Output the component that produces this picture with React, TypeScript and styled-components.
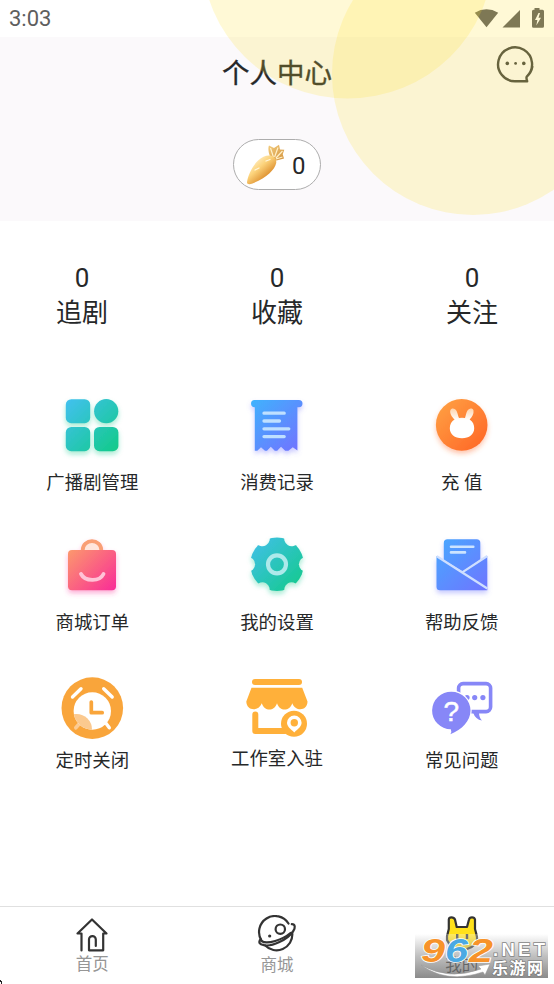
import React from "react";
import styled, { createGlobalStyle } from "styled-components";

const GlobalStyle = createGlobalStyle`
  * { box-sizing: border-box; }
  body { margin: 0; background: #fff; }
`;

const Screen = styled.div`
  position: relative;
  display: flex;
  flex-direction: column;
  width: 554px;
  height: 984px;
  overflow: hidden;
  background: #fff;
  color: #262829;
  font-family: Roboto, "Noto Sans CJK SC", sans-serif;
`;

const StatusBar = styled.div`
  display: flex;
  align-items: center;
  justify-content: space-between;
  height: 37px;
  padding: 1px 9px 0;
  font-size: 22px;
  line-height: 34px;
  color: #5e5e5e;
`;

const StatusIcons = styled.svg`
  display: block;
  width: 72px;
  height: 22px;
`;

const Header = styled.header`
  display: flex;
  flex-direction: column;
  align-items: center;
  height: 184px;
  background: #fbf9fb;
`;

const TitleBar = styled.div`
  display: grid;
  grid-template-columns: 1fr auto 1fr;
  width: 100%;
  height: 72px;
  padding: 0 20px;
`;

const Title = styled.h1`
  grid-column: 2;
  margin: 0;
  font-size: 27.5px;
  font-weight: 400;
  line-height: 73px;
  -webkit-text-stroke: 0.35px #262829;
`;

const ChatIcon = styled.svg`
  justify-self: end;
  width: 40px;
  height: 40px;
  margin-top: 7px;
`;

const Balance = styled.div`
  display: flex;
  align-items: center;
  width: 88px;
  height: 51px;
  margin-top: 30px;
  padding-left: 11px;
  gap: 5px;
  border: 1.5px solid #adadad;
  border-radius: 26px;
  background: #fff;
  font-size: 24px;
  line-height: 28px;
`;

const Amount = styled.span`
  padding-top: 3px;
`;

const Glow = styled.svg`
  position: absolute;
  inset: 0 0 auto 0;
  width: 554px;
  height: 221px;
  pointer-events: none;
`;

const Stats = styled.section`
  display: flex;
  justify-content: space-between;
  height: 164px;
  padding: 40px 56px 0;
`;

const Stat = styled.div`
  display: flex;
  flex-direction: column;
  align-items: center;
  font-size: 26px;
  line-height: 35px;
`;

const Menu = styled.section`
  display: grid;
  grid-template-columns: repeat(3, 1fr);
  grid-auto-rows: 140px;
  flex: 1;
`;

const MenuItem = styled.div<{ $gap: number }>`
  display: flex;
  flex-direction: column;
  align-items: center;
  gap: ${(p) => p.$gap}px;
  font-size: 18.4px;
  line-height: 26px;
  white-space: pre;
`;

const MenuIcon = styled.svg`
  display: block;
  width: 80px;
  height: 80px;
  flex: none;
  overflow: visible;
`;

const TabBar = styled.nav`
  display: grid;
  grid-template-columns: repeat(3, 1fr);
  height: 78px;
  border-top: 1px solid #e0e0e0;
`;

const Tab = styled.div<{ $active?: boolean; $drop?: number }>`
  display: flex;
  flex-direction: column;
  align-items: center;
  padding-top: 8px;
  gap: ${(p) => p.$drop ?? 1}px;
  font-size: 16.5px;
  line-height: 20px;
  color: ${(p) => (p.$active ? "#262829" : "#969696")};
`;

const TabIcon = styled.svg`
  display: block;
  width: 40px;
  height: 38px;
  flex: none;
`;

const Watermark = styled.div`
  position: absolute;
  left: 415px;
  top: 934px;
  width: 133px;
  height: 44px;
  background: linear-gradient(rgba(255, 255, 255, 0.3), rgba(150, 150, 150, 0.6) 50%, rgba(110, 110, 110, 0.8));
`;

const WatermarkArt = styled.svg`
  display: block;
  width: 133px;
  height: 44px;
  overflow: visible;
`;

const CornerMark = styled.svg`
  position: absolute;
  left: 0;
  bottom: 0;
  width: 3px;
  height: 4px;
`;

const GradientDef = ({ id, from, to }: { id: string; from: string; to: string }) => (
  <defs>
    <linearGradient id={id} gradientUnits="userSpaceOnUse" x1="16" y1="16" x2="64" y2="64">
      <stop offset="0" stopColor={from} />
      <stop offset="1" stopColor={to} />
    </linearGradient>
    <filter id={id + "-shadow"} x="-30%" y="-30%" width="160%" height="160%">
      <feDropShadow dx="0" dy="3" stdDeviation="2.8" floodColor={to} floodOpacity="0.38" />
    </filter>
  </defs>
);

const ManageIcon = () => (
  <MenuIcon viewBox="0 0 80 80">
    <GradientDef id="manage" from="#40c1ec" to="#13ca8c" />
    <g fill="url(#manage)" filter="url(#manage-shadow)">
      <rect x="13.8" y="14.2" width="24.4" height="24" rx="5.5" />
      <circle cx="54.2" cy="26.2" r="12.1" />
      <rect x="13.8" y="42" width="24.4" height="24.2" rx="5.5" />
      <rect x="42" y="42" width="24.4" height="24.2" rx="5.5" />
    </g>
  </MenuIcon>
);

const ReceiptIcon = () => (
  <MenuIcon viewBox="0 0 80 80">
    <GradientDef id="receipt" from="#40b1fd" to="#7272ff" />
    <path
      fill="url(#receipt)"
      filter="url(#receipt-shadow)"
      d="M17.5 15h44.4a3.5 3.5 0 0 1 0 7.2H60.4V65.5L55.8 62.2 51.4 65.8 48.2 65.8 44 61.7 40.2 65.8 37.8 65.8 33.8 61.7 30 65.8 28 65.8 24 62.2 20.3 65.8H17.8V22.2a3.6 3.6 0 0 1 -.3-7.2Z"
    />
    <path d="M27 28.2H47.2M27 36H42.5M27 43.8H51.8M27 51.6H47.2" stroke="#bfe0ff" strokeWidth="3.3" strokeLinecap="round" />
  </MenuIcon>
);

const RechargeIcon = () => (
  <MenuIcon viewBox="0 0 80 80">
    <GradientDef id="recharge" from="#ffa143" to="#ff6526" />
    <circle cx="39.7" cy="39.9" r="25.8" fill="url(#recharge)" filter="url(#recharge-shadow)" />
    <linearGradient id="bunny" x1="0" y1="0" x2="0" y2="1">
      <stop offset="0" stopColor="#ffd4ac" />
      <stop offset="0.4" stopColor="#fff" />
    </linearGradient>
    <path
      fill="url(#bunny)"
      d="M32.6 34.4C29.6 32 27.6 28 28.3 25.5C29.4 22.6 33.2 23.2 34.7 26.2C35.8 28.6 36 31 37 33Q40.2 32.5 43 33C43.8 31 44 28.2 45.2 26C46.8 23 50.6 22.6 51.5 25.5C52 28.7 50.2 32.2 47.6 34.5C50.9 36.4 52.2 39.8 52.2 43.2C52.2 49.2 47.3 53.2 40 53.2C32.6 53.2 27.8 49.2 27.8 43.2C27.8 39.2 29.6 36.2 32.6 34.4Z"
    />
  </MenuIcon>
);

const OrderIcon = () => (
  <MenuIcon viewBox="0 0 80 80">
    <GradientDef id="order" from="#fca468" to="#f92d97" />
    <g filter="url(#order-shadow)">
      <path d="M30.8 27V24.6a9.2 8.5 0 0 1 18.4 0V27" fill="#ffe5dc" stroke="#f99f75" strokeWidth="3.8" />
      <rect x="16" y="25" width="48" height="40.2" rx="4" fill="url(#order)" />
    </g>
    <path d="M29 49C33 56.6 47.5 57.2 51.5 49" fill="none" stroke="#ffc3d7" strokeWidth="3.8" strokeLinecap="round" />
  </MenuIcon>
);

const SettingsIcon = () => (
  <MenuIcon viewBox="0 0 80 80">
    <GradientDef id="settings" from="#40c0e6" to="#13ca8c" />
    <mask id="gear-notches">
      <circle cx="40" cy="39.3" r="26.8" fill="#fff" />
      {[0, 60, 120, 180, 240, 300].map((angle) => (
        <circle key={angle} cx="69.3" cy="39.3" r="7.4" transform={`rotate(${angle} 40 39.3)`} />
      ))}
    </mask>
    <g filter="url(#settings-shadow)">
      <rect x="10" y="10" width="60" height="60" fill="url(#settings)" mask="url(#gear-notches)" />
    </g>
    <circle cx="40" cy="39.3" r="9" fill="none" stroke="#ade9ea" strokeWidth="4.2" />
  </MenuIcon>
);

const FeedbackIcon = () => (
  <MenuIcon viewBox="0 0 80 80">
    <GradientDef id="feedback" from="#49a7ff" to="#6e76ff" />
    <g fill="url(#feedback)" filter="url(#feedback-shadow)">
      <path d="M25.5 14.3H54.6a3.7 3.7 0 0 1 3.7 3.7V34.5L41 46.5 21.8 35V18A3.7 3.7 0 0 1 25.5 14.3Z" />
      <path d="M14.5 31L41 47.5 65.3 31V65.2H18a3.5 3.5 0 0 1-3.5-3.5Z" />
    </g>
    <path d="M14.8 31.2L65.3 63.5M40.6 47.2L65.3 31" stroke="#cfdfff" strokeWidth="2.2" />
    <path d="M29 21.8H51.3M29 27.4H43" stroke="#cce4ff" strokeWidth="2.6" strokeLinecap="round" />
  </MenuIcon>
);

const TimerIcon = () => (
  <MenuIcon viewBox="0 0 80 80">
    <clipPath id="clock-face"><circle cx="40.3" cy="46" r="18.7" /></clipPath>
    <circle cx="40.3" cy="43.1" r="30.8" fill="#f9a53b" />
    <path d="M53 57L57.3 62.8M20.5 32L29 23.8M51.7 23.8L60.2 32" stroke="#fff" strokeWidth="3.4" strokeLinecap="round" />
    <path d="M28 58L23.8 62.8" stroke="#fccb92" strokeWidth="3.6" strokeLinecap="round" />
    <circle cx="40.3" cy="46" r="18.7" fill="#fff" />
    <circle cx="24.5" cy="64.5" r="15.5" fill="#fbc98f" clipPath="url(#clock-face)" />
    <path d="M39.3 37V47.7H50.2" fill="none" stroke="#f9a53b" strokeWidth="3.7" strokeLinecap="round" strokeLinejoin="round" />
  </MenuIcon>
);

const StudioIcon = () => (
  <MenuIcon viewBox="0 0 80 80">
    <g fill="#ffb03a">
      <rect x="15" y="14" width="50" height="6" rx="3" />
      <path d="M14.5 22.8H65.2L70.5 36.5C70.5 46 58.5 47 55.3 38.2C52.5 46.7 42.8 46.7 40 38.2C37.2 46.7 27.5 46.7 24.8 38.2C21.5 47 9.5 46 9.3 36.5Z" />
      <circle cx="57" cy="58.7" r="13" />
    </g>
    <path d="M18.3 49.5V66H48" fill="none" stroke="#ffb03a" strokeWidth="6" strokeLinecap="round" strokeLinejoin="round" />
    <path d="M57.3 67.4C53.5 64 50 61.4 50 57.8a7.3 7.3 0 0 1 14.6 0C64.6 61.4 61 64 57.3 67.4Z" fill="#fff" />
    <circle cx="57.3" cy="57.7" r="3.7" fill="#ffb03a" />
  </MenuIcon>
);

const QuestionMark = styled.text`
  font: 400 28px "Liberation Sans", sans-serif;
  fill: #fff;
  stroke: #fff;
  stroke-width: 0.5px;
  text-anchor: middle;
`;

const FaqIcon = () => (
  <MenuIcon viewBox="0 0 80 80">
    <rect x="36.6" y="18.6" width="32" height="28" rx="4.5" fill="#fff" stroke="#8787f7" strokeWidth="3.6" />
    <path d="M51 47.5H57Q57 52.5 60 55.5Q53.5 54.5 51 47.5Z" fill="#8787f7" />
    <g fill="#8787f7">
      <circle cx="45" cy="32.6" r="2.6" />
      <circle cx="52.7" cy="32.6" r="2.6" />
      <circle cx="60.9" cy="32.6" r="2.6" />
    </g>
    <path
      d="M29.5 26.8A19 18.7 0 0 1 48.5 45.6C48.5 56 40 64.6 28.4 69.3Q30 66.6 28.8 64.3A19 18.7 0 0 1 29.5 26.8Z"
      fill="#8787f7"
      stroke="#fff"
      strokeWidth="2.4"
      paintOrder="stroke"
    />
    <QuestionMark x="29.3" y="55.8">?</QuestionMark>
  </MenuIcon>
);

const Carrot = () => (
  <svg width="42" height="44" viewBox="0 0 42 44">
    <defs>
      <linearGradient id="carrot" gradientUnits="userSpaceOnUse" x1="11" y1="17" x2="24" y2="32">
        <stop offset="0" stopColor="#ffeab9" />
        <stop offset="0.4" stopColor="#fcd37b" />
        <stop offset="1" stopColor="#dd8f2e" />
      </linearGradient>
      <linearGradient id="leaf" x1="0" y1="0" x2="1" y2="1">
        <stop offset="0" stopColor="#f3cd7f" />
        <stop offset="1" stopColor="#d3923c" />
      </linearGradient>
    </defs>
    <path d="M25.5 14.5C23.5 10 22.8 5 24 2.5L29 5 34 1.7 35 6.5 39.3 6.7 37.7 11.2 39 15.5 31.5 17.5Z" fill="url(#leaf)" />
    <path d="M25.5 5L28.4 14M33 4.5L29.6 14M37.5 8L31 15M37.5 14L31 16" stroke="#fff0c8" strokeWidth="1.2" />
    <path d="M24 12.5C28.5 12.5 31.8 15.5 31.2 20C29.8 27 21 35 7.5 40.5C4.5 41.6 1.8 41.6 2 39C3.4 30 10 17.5 18.5 13.8Q21 12.5 24 12.5Z" fill="url(#carrot)" />
    <path d="M10 27L14 25M21 18L25 16.5" stroke="#fff6dc" strokeWidth="1.3" strokeLinecap="round" />
  </svg>
);

const menuItems = [
  { label: "广播剧管理", Icon: ManageIcon, gap: 5 },
  { label: "消费记录", Icon: ReceiptIcon, gap: 5 },
  { label: "充 值", Icon: RechargeIcon, gap: 5 },
  { label: "商城订单", Icon: OrderIcon, gap: 5 },
  { label: "我的设置", Icon: SettingsIcon, gap: 5 },
  { label: "帮助反馈", Icon: FeedbackIcon, gap: 5 },
  { label: "定时关闭", Icon: TimerIcon, gap: 3 },
  { label: "工作室入驻", Icon: StudioIcon, gap: 1 },
  { label: "常见问题", Icon: FaqIcon, gap: 3 },
];

const stats = ["追剧", "收藏", "关注"];

const BrandText = styled.text<{ $fill: string }>`
  font: italic 700 33px "Liberation Sans", sans-serif;
  fill: ${(p) => p.$fill};
  stroke: #fff;
  stroke-width: 1.6px;
  paint-order: stroke;
`;

const CaptionText = styled.text`
  font: 700 16px "Noto Sans CJK SC", sans-serif;
  fill: #fff;
  stroke: #777;
  stroke-width: 1.2px;
  paint-order: stroke;
`;

const NetText = styled.text`
  font: 700 18.5px "Liberation Sans", sans-serif;
  fill: #fff;
  stroke: #858585;
  stroke-width: 1.6px;
  paint-order: stroke;
`;

export default function App() {
  return (
    <>
      <GlobalStyle />
      <Screen>
        <StatusBar>
          <span>3:03</span>
          <StatusIcons viewBox="0 0 72 22" fill="#5e5e5e">
            <path d="M1.8 4.7Q13.5-2.2 25.2 4.7L13.5 19.2Z" />
            <path d="M29.5 19.5L47 2.1V19.5Z" />
            <path d="M61.5 0H66.5V1.8H69.5Q71 1.8 71 3.3V18.2Q71 19.7 69.5 19.7H60.5Q59 19.7 59 18.2V3.3Q59 1.8 60.5 1.8H61.5Z" />
            <path d="M65.5 5L62 12H64.4L63.3 17.5L68 9.8H65.5L67 5Z" fill="#fff" />
          </StatusIcons>
        </StatusBar>
        <Header>
          <TitleBar>
            <Title>个人中心</Title>
            <ChatIcon viewBox="0 0 40 40">
              <path d="M32.6 32.8A17 17 0 1 0 21.5 37.3H33.2Q32.2 35 32.6 32.8Q37.4 28.5 38.5 22" fill="none" stroke="#414441" strokeWidth="2.4" strokeLinejoin="round" />
              <g fill="#414441">
                <circle cx="13.3" cy="19.4" r="1.8" />
                <circle cx="21.6" cy="19.4" r="1.4" />
                <circle cx="29.8" cy="19.4" r="1.8" />
              </g>
            </ChatIcon>
          </TitleBar>
          <Balance>
            <Carrot />
            <Amount>0</Amount>
          </Balance>
        </Header>
        <Stats>
          {stats.map((label) => (
            <Stat key={label}>
              <span>0</span>
              <span>{label}</span>
            </Stat>
          ))}
        </Stats>
        <Menu>
          {menuItems.map(({ label, Icon, gap }) => (
            <MenuItem key={label} $gap={gap}>
              <Icon />
              <span>{label}</span>
            </MenuItem>
          ))}
        </Menu>
        <TabBar>
          <Tab $drop={2}>
            <TabIcon viewBox="0 0 40 38" fill="none" stroke="#333" strokeWidth="2.2" strokeLinecap="round" strokeLinejoin="round">
              <path d="M9.5 35.5V18.5H5.5L20 4.5 34.5 18.5H31.2V35.3H17V24.5a3.4 3.4 0 0 1 6.8 0V31" />
            </TabIcon>
            <span>首页</span>
          </Tab>
          <Tab $drop={3}>
            <TabIcon viewBox="0 0 40 38" fill="none" stroke="#333" strokeWidth="2.2" strokeLinecap="round" strokeLinejoin="round">
              <path d="M31.5 8.5A15.8 15.8 0 0 0 4.5 25.5M8 30.3A15.8 15.8 0 0 0 35.3 18.5" />
              <path d="M34.8 9.2C38.2 9.3 38.8 12.5 36 16.5C30.5 24.5 15 32 7 30.2C2.5 29.3 1 27.5 3.7 24" />
              <path d="M4.5 26C10 30 26 24.5 33.5 18" />
              <circle cx="23.3" cy="14.2" r="4.7" />
              <circle cx="12.7" cy="21" r="1" fill="#333" strokeWidth="1.2" />
            </TabIcon>
            <span>商城</span>
          </Tab>
          <Tab $active $drop={3}>
            <TabIcon viewBox="0 0 40 38" strokeLinejoin="round">
              <path d="M5 25V21Q6 17.5 6.8 14V4.5Q7 2.3 9.5 2.3T13 4.5L14.7 12H25L27 4.5Q27.5 2.3 30 2.3T33 4.5V14Q34.2 18 35 22V26Q31 34.5 20 34.5T5 25Z" fill="#ffe11b" stroke="#333" strokeWidth="2.2" />
              <path d="M15.2 19V24M25 19V24" stroke="#333" strokeWidth="2.4" />
            </TabIcon>
            <span>我的</span>
          </Tab>
        </TabBar>
        <Glow viewBox="0 0 554 221" fill="rgba(255, 226, 50, 0.2)">
          <ellipse cx="347.5" cy="-43" rx="145" ry="141.5" />
          <circle cx="473" cy="74" r="141" />
        </Glow>
        <Watermark>
          <WatermarkArt viewBox="0 0 133 44">
            <path d="M6 31Q34 47 66 35L63 32 75 30 70 41 68 38Q32 50 6 31Z" fill="#fff" stroke="#999" strokeWidth="0.5" />
            <BrandText x="6" y="27.5" $fill="#f7932a" textLength="24" lengthAdjust="spacingAndGlyphs">9</BrandText>
            <BrandText x="30" y="27.5" $fill="#4ba9e3" textLength="23" lengthAdjust="spacingAndGlyphs">6</BrandText>
            <BrandText x="54" y="27.5" $fill="#f7932a" textLength="24" lengthAdjust="spacingAndGlyphs">2</BrandText>
            <NetText x="78" y="21.5" textLength="52" lengthAdjust="spacing">.NET</NetText>
            <CaptionText x="77" y="40" textLength="51">乐游网</CaptionText>
          </WatermarkArt>
        </Watermark>
        <CornerMark viewBox="0 0 3 4">
          <path d="M0 0H1V1H2V4H1V2H0Z" fill="#222" />
        </CornerMark>
      </Screen>
    </>
  );
}
